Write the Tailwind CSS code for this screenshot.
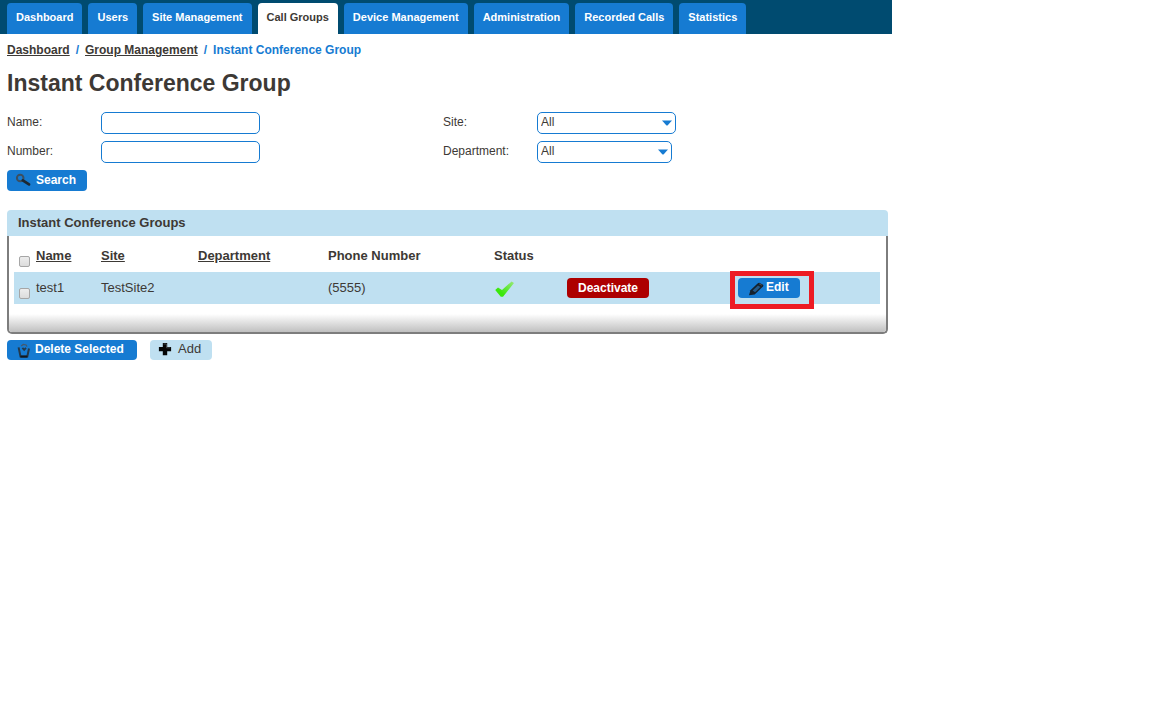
<!DOCTYPE html>
<html lang="en">

<head>
  <meta charset="UTF-8" />
  <meta name="viewport" content="width=device-width, initial-scale=1.0" />
  <script src="https://cdn.jsdelivr.net/npm/@tailwindcss/browser@4"></script>
  <title>Instant Conference Group</title>
</head>

<body class="bg-white font-['Liberation_Sans',Arial,sans-serif] text-[12px] leading-4 text-[#3d3935]">
  <div class="max-w-[892px]">

    <!-- main tabs -->
    <nav class="flex h-[34px] items-end gap-[6px] bg-[#004b70] px-[7px] text-[11px] font-bold text-white">
      <a href="#" class="h-[31px] rounded-t bg-[#167bd2] px-[9px] pt-[6px]">Dashboard</a>
      <a href="#" class="h-[31px] rounded-t bg-[#167bd2] px-[9px] pt-[6px]">Users</a>
      <a href="#" class="h-[31px] rounded-t bg-[#167bd2] px-[9px] pt-[6px]">Site Management</a>
      <a href="#" class="h-[31px] rounded-t bg-white px-[9px] pt-[6px] text-[#3d3935]">Call Groups</a>
      <a href="#" class="h-[31px] rounded-t bg-[#167bd2] px-[9px] pt-[6px]">Device Management</a>
      <a href="#" class="h-[31px] rounded-t bg-[#167bd2] px-[9px] pt-[6px]">Administration</a>
      <a href="#" class="h-[31px] rounded-t bg-[#167bd2] px-[9px] pt-[6px]">Recorded Calls</a>
      <a href="#" class="h-[31px] rounded-t bg-[#167bd2] px-[9px] pt-[6px]">Statistics</a>
    </nav>

    <main class="pl-[7px] pr-1">
      <div class="mt-2 flex gap-[6px] font-bold text-[#167bd2]">
        <a href="#" class="text-[#3d3935] underline">Dashboard</a>
        <span>/</span>
        <a href="#" class="text-[#3d3935] underline">Group Management</a>
        <span>/</span>
        <span>Instant Conference Group</span>
      </div>

      <h1 class="mt-3 text-[23px] leading-[26px] font-bold">Instant Conference Group</h1>

      <!-- search form -->
      <form class="mt-4">
        <div class="grid grid-cols-[94px_342px_94px_1fr] gap-y-[7px]">
          <label for="name" class="pt-[2px]">Name:</label>
          <input id="name" type="text" class="h-[22px] w-[159px] rounded-[5px] border border-[#167bd2] px-1">
          <label for="site" class="pt-[2px]">Site:</label>
          <div class="relative h-[22px] w-[139px]">
            <select id="site" class="h-full w-full appearance-none rounded-[5px] border border-[#167bd2] bg-white pb-[2px] pl-[3px]">
              <option>All</option>
            </select>
            <svg class="pointer-events-none absolute top-2 right-1 h-[6px] w-[10px]" viewBox="0 0 10 6"><path d="M0 .5h10L5.5 5.5h-1z" fill="#167bd2" /></svg>
          </div>
          <label for="number" class="pt-[2px]">Number:</label>
          <input id="number" type="text" class="h-[22px] w-[159px] rounded-[5px] border border-[#167bd2] px-1">
          <label for="department" class="pt-[2px]">Department:</label>
          <div class="relative h-[22px] w-[135px]">
            <select id="department" class="h-full w-full appearance-none rounded-[5px] border border-[#167bd2] bg-white pb-[2px] pl-[3px]">
              <option>All</option>
            </select>
            <svg class="pointer-events-none absolute top-2 right-1 h-[6px] w-[10px]" viewBox="0 0 10 6"><path d="M0 .5h10L5.5 5.5h-1z" fill="#167bd2" /></svg>
          </div>
        </div>

        <button type="button" class="mt-[7px] flex h-[21px] w-[80px] items-center rounded bg-[#167bd2] pb-[2px] pl-2 font-bold text-white">
          <svg class="mt-px mr-[5px] h-4 w-4" viewBox="0 0 16 16" fill="none">
            <circle cx="5.2" cy="6" r="3.3" stroke="#3c4f60" stroke-width="2" />
            <path d="M7.8 8.4l6.2 4" stroke="#1c2833" stroke-width="2.8" stroke-linecap="round" />
          </svg>
          Search
        </button>
      </form>

      <!-- group list -->
      <section class="mt-[19px]">
        <h2 class="h-[26px] rounded-t bg-[#bfe0f1] pt-[5px] pl-[11px] text-[13px] font-bold">Instant Conference Groups</h2>
        <div class="rounded-b-[5px] border-x-2 border-b-2 border-[#7d7d7d] pt-1">
          <div class="pr-[6px] pl-[5px]">
            <table class="w-full table-fixed text-left text-[13px]">
              <colgroup>
                <col class="w-[22px]">
                <col class="w-[65px]">
                <col class="w-[97px]">
                <col class="w-[130px]">
                <col class="w-[166px]">
                <col class="w-[73px]">
                <col class="w-[171px]">
                <col>
              </colgroup>
              <thead>
                <tr class="h-8">
                  <th class="pt-[11px] pl-[5px]"><input type="checkbox" aria-label="Select all" class="block size-[11px] appearance-none rounded-[2px] border border-[#a6a6a6] bg-linear-to-b from-[#ededed] to-[#dcdcdc]"></th>
                  <th><a href="#" class="underline">Name</a></th>
                  <th><a href="#" class="underline">Site</a></th>
                  <th><a href="#" class="underline">Department</a></th>
                  <th>Phone Number</th>
                  <th>Status</th>
                  <td></td>
                  <td></td>
                </tr>
              </thead>
              <tbody>
                <tr class="h-8 bg-[#bfe0f1]">
                  <td class="pt-[11px] pl-[5px]"><input type="checkbox" aria-label="Select test1" class="block size-[11px] appearance-none rounded-[2px] border border-[#a6a6a6] bg-linear-to-b from-[#ededed] to-[#dcdcdc]"></td>
                  <td>test1</td>
                  <td>TestSite2</td>
                  <td></td>
                  <td>(5555)</td>
                  <td>
                    <svg class="mt-[2px] h-4 w-5" viewBox="0 0 20 16">
                      <defs>
                        <linearGradient id="tick" x1="0" y1="1" x2="1" y2="0">
                          <stop offset=".3" stop-color="#3be80c" />
                          <stop offset="1" stop-color="#9be87c" />
                        </linearGradient>
                      </defs>
                      <path d="M1.2 8.9L4 6.4l4 2.6L17.6.4 20 2 9 15.8H6.8z" fill="url(#tick)" />
                    </svg>
                  </td>
                  <td>
                    <button type="button" class="block h-5 w-[82px] rounded bg-[#ad0000] pb-px text-[12px] font-bold text-white">Deactivate</button>
                  </td>
                  <td class="relative">
                    <button type="button" class="flex h-5 w-[62px] items-center rounded bg-[#167bd2] pb-[2px] pl-[10px] text-[12px] font-bold text-white">
                      <svg class="mt-[3px] mr-[2px] h-4 w-4" viewBox="0 0 16 16">
                        <path d="M1 14.2l1.4-5L9.6 2.4c.7-.6 1.4-.7 2.1-.5l3 1.6c.8.5.9 1.3.3 2l-8.3 7.9z" fill="#14212d" />
                        <path d="M4.6 9.6l5.4-5 2.4 1.4-5.3 5.2z" fill="#245a8a" />
                        <path d="M11 2.8l3 1.5" stroke="#4a4a4a" stroke-width="1" />
                      </svg>
                      Edit
                    </button>
                    <!-- highlight frame -->
                    <div class="pointer-events-none absolute top-[-1px] left-[-8px] h-[38px] w-[84px] border-5 border-[#ed1c24]"></div>
                  </td>
                </tr>
              </tbody>
            </table>
          </div>
          <div class="mt-[10px] h-[18px] rounded-b-[3px] bg-linear-to-b from-white to-[#c0c0c0]"></div>
        </div>
      </section>

      <div class="mt-[6px] flex gap-[13px]">
        <button type="button" class="flex h-5 w-[130px] items-center rounded bg-[#167bd2] pb-[2px] pl-[9px] font-bold text-white">
          <svg class="mt-[4px] mr-[3px] h-4 w-4" viewBox="0 0 16 16" fill="none">
            <path d="M2.6 4.4l1.9 9.1h6.8l1.7-8" stroke="#24394b" stroke-width="2" />
            <path d="M4.4 13.6h7" stroke="#101820" stroke-width="2" />
            <path d="M5.2 3l2.1-1.6 2.8.6.9 1.6" stroke="#47586a" stroke-width="1.2" />
            <path d="M6.4 4.8l1.8 2 1.8-1.9" stroke="#24394b" stroke-width="1.8" />
          </svg>
          Delete Selected
        </button>
        <button type="button" class="flex h-5 w-[62px] items-center rounded bg-[#bfe0f1] pb-[2px] pl-[8px] text-[13px]">
          <svg class="mr-[6px] h-[14px] w-[14px]" viewBox="0 0 14 14">
            <path d="M4.8 1h4.4v4h3.9v4.2H9.2v4H4.8v-4H.9V5h3.9z" fill="#050505" />
            <path d="M5.5 2h3v3.8h3.8" stroke="#3f4448" stroke-width="1" fill="none" />
          </svg>
          Add
        </button>
      </div>
    </main>
  </div>
</body>

</html>
